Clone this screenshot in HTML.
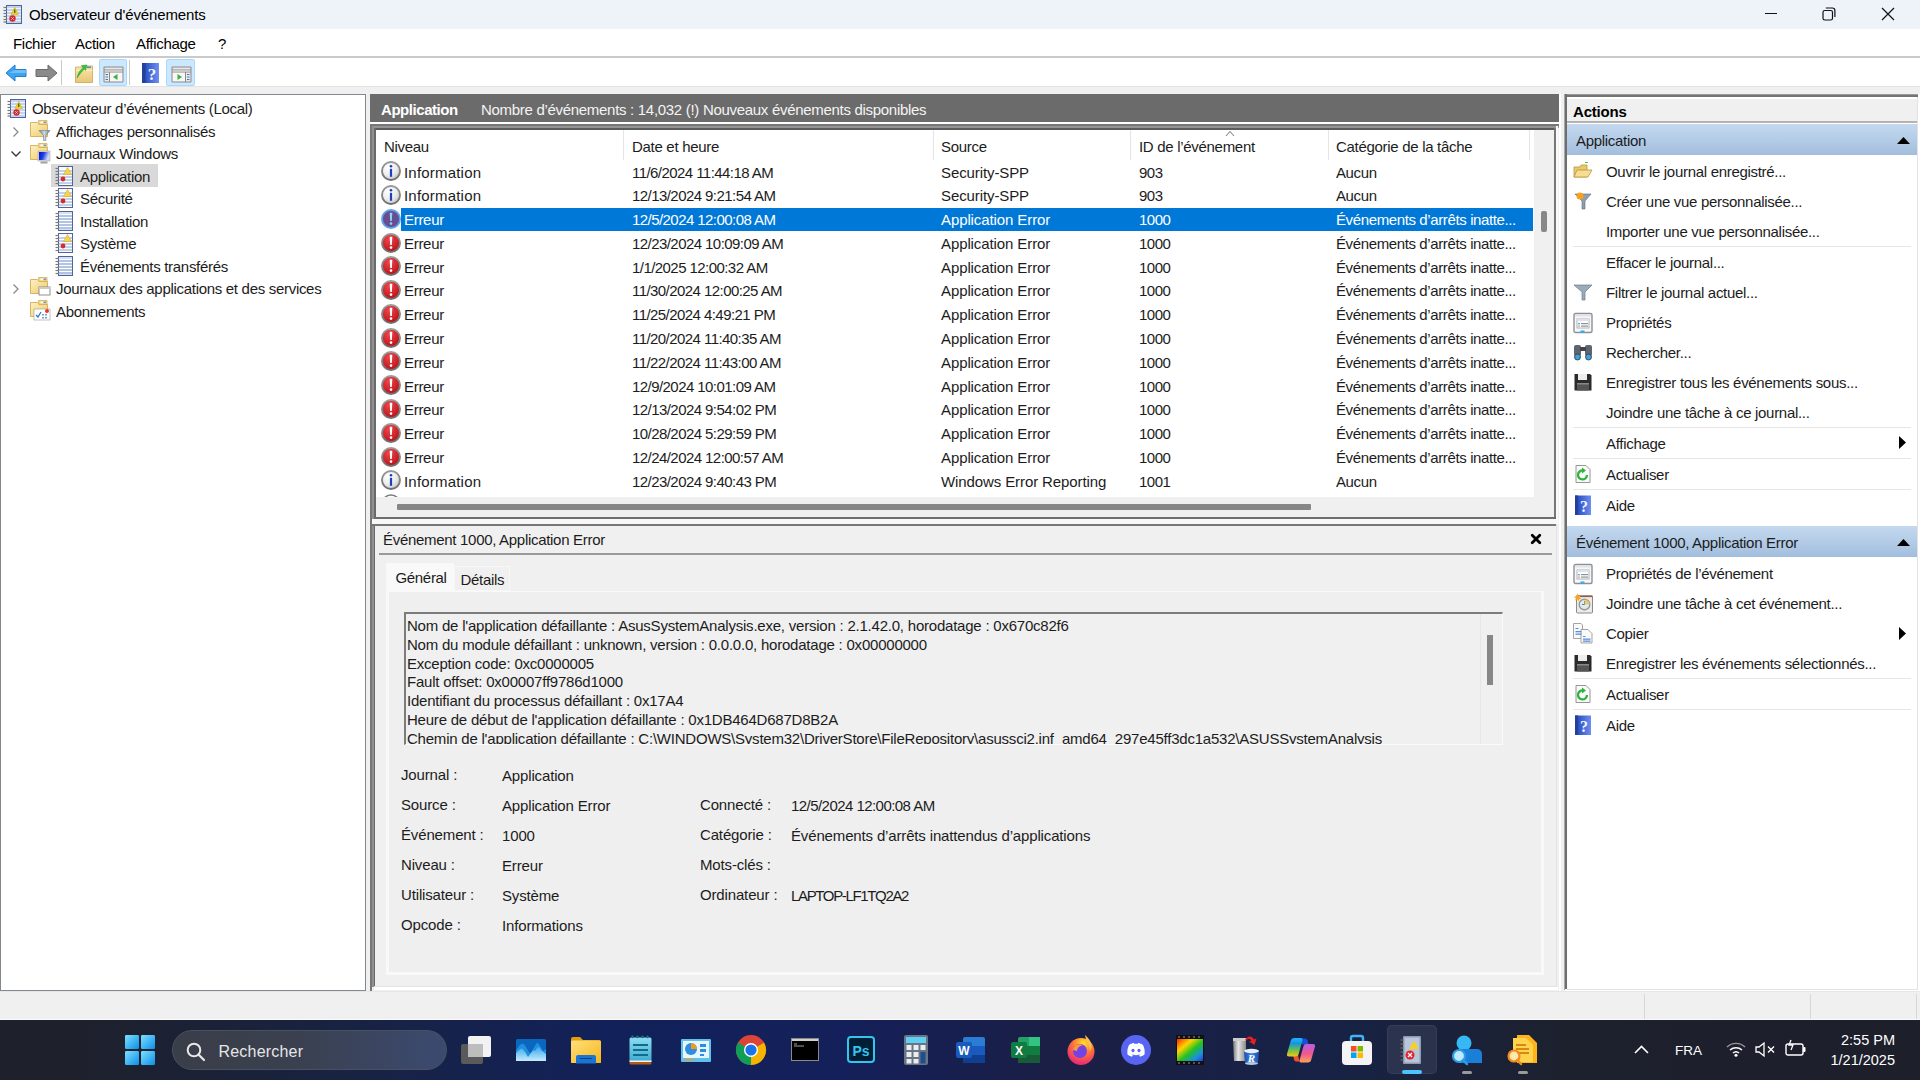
<!DOCTYPE html><html><head><meta charset="utf-8"><style>
html,body{margin:0;padding:0;width:1920px;height:1080px;overflow:hidden;background:#f0f0f0}
.t{position:absolute;white-space:pre;font-family:"Liberation Sans",sans-serif;line-height:1;color:#1c1c1c}
.r{position:absolute;box-sizing:border-box}
svg.r{overflow:visible}
</style></head><body>
<div class="r" style="left:0px;top:0px;width:1920px;height:29px;background:#eef3f9"></div>
<div class="r" style="left:0px;top:29px;width:1920px;height:28px;background:#fff"></div>
<div class="r" style="left:0px;top:56px;width:1920px;height:2px;background:#cacaca"></div>
<div class="r" style="left:0px;top:58px;width:1920px;height:28px;background:#fff"></div>
<div class="r" style="left:0px;top:86px;width:1920px;height:934px;background:#f0f0f0"></div>
<div class="r" style="left:0px;top:86px;width:1920px;height:1px;background:#e3e3e3"></div>
<svg class="r" style="left:3px;top:5px" width="21" height="21" viewBox="0 0 21 21"><g transform="scale(1.0)">
<rect x="3.5" y="0.5" width="15" height="18" fill="#c3d3ec" stroke="#4d62a0"/>
<g stroke="#eef4fc" stroke-width="1"><line x1="4" y1="3.5" x2="18" y2="3.5"/><line x1="4" y1="6.5" x2="18" y2="6.5"/><line x1="4" y1="9.5" x2="18" y2="9.5"/><line x1="4" y1="12.5" x2="18" y2="12.5"/><line x1="4" y1="15.5" x2="18" y2="15.5"/></g>
<g stroke="#777" stroke-width="1.2"><line x1="0.5" y1="2.5" x2="4" y2="2.5"/><line x1="0.5" y1="5.5" x2="4" y2="5.5"/><line x1="0.5" y1="8.5" x2="4" y2="8.5"/><line x1="0.5" y1="11.5" x2="4" y2="11.5"/><line x1="0.5" y1="14.5" x2="4" y2="14.5"/><line x1="0.5" y1="17" x2="4" y2="17"/></g>
<path d="M11.8 2.5 L15.5 9.5 H8 Z" fill="#f2d21c" stroke="#c9a20a" stroke-width="0.5"/><rect x="11.3" y="4.5" width="1" height="3.5" fill="#333"/>
<circle cx="9.5" cy="13.5" r="3.2" fill="#d52a30"/><path d="M8.3 12.3 L10.7 14.7 M10.7 12.3 L8.3 14.7" stroke="#f6c6c6" stroke-width="0.9"/>
</g></svg>
<div class="t" style="left:29px;top:7.30px;font-size:15px;color:#000;font-weight:normal;letter-spacing:-0.12px;">Observateur d&#x27;événements</div>
<div class="r" style="left:1765px;top:13px;width:12px;height:1px;background:#111"></div>
<svg class="r" style="left:1822px;top:7px" width="14" height="14" viewBox="0 0 14 14"><rect x="1" y="3.5" width="9.5" height="9.5" rx="1.8" fill="none" stroke="#111" stroke-width="1.2"/><path d="M3.8 1 h6.5 a2.6 2.6 0 0 1 2.6 2.6 v6.5" fill="none" stroke="#111" stroke-width="1.2"/></svg>
<svg class="r" style="left:1881px;top:7px" width="14" height="14" viewBox="0 0 14 14"><path d="M1 1 L13 13 M13 1 L1 13" stroke="#111" stroke-width="1.2"/></svg>
<div class="t" style="left:13px;top:36.30px;font-size:15px;color:#000;font-weight:normal;letter-spacing:-0.3px;">Fichier</div>
<div class="t" style="left:75px;top:36.30px;font-size:15px;color:#000;font-weight:normal;letter-spacing:-0.3px;">Action</div>
<div class="t" style="left:136px;top:36.30px;font-size:15px;color:#000;font-weight:normal;letter-spacing:-0.3px;">Affichage</div>
<div class="t" style="left:218px;top:36.30px;font-size:15px;color:#000;font-weight:normal;letter-spacing:-0.3px;">?</div>
<svg class="r" style="left:5px;top:63px" width="24" height="22" viewBox="0 0 24 22"><path d="M1 10 L10 2 V6.5 H21 V13.5 H10 V18 Z" fill="#3fa3f0" stroke="#1f7fd0" stroke-width="1"/><path d="M10 7 H21 V10 H4" fill="#8cd0ff" opacity=".6"/></svg>
<svg class="r" style="left:34px;top:63px" width="24" height="22" viewBox="0 0 24 22"><path d="M23 10 L14 2 V6.5 H2 V13.5 H14 V18 Z" fill="#8a8a8a" stroke="#6b6b6b" stroke-width="1"/></svg>
<div class="r" style="left:61px;top:60px;width:1px;height:25px;background:#c8c8c8"></div>
<div class="r" style="left:129px;top:60px;width:1px;height:25px;background:#c8c8c8"></div>
<svg class="r" style="left:75px;top:63px" width="19" height="20" viewBox="0 0 19 20"><defs><linearGradient id="fy" x1="0" y1="0" x2="0" y2="1"><stop offset="0" stop-color="#fbe7a8"/><stop offset="1" stop-color="#e9c577"/></linearGradient></defs><path d="M0.5 4 H7 L8 3 H17.5 V19.5 H0.5Z" fill="url(#fy)" stroke="#c9a55a" stroke-width="0.8"/><rect x="1" y="7" width="16.5" height="1" fill="#f9ecc4"/><rect x="12" y="3.5" width="4" height="1.6" fill="#4a90d9"/><path d="M2 15 C3 10 5 7 8 5 L6.5 2.5 L12 2 L10.5 7.5 L9.5 6 C7 8 5 11 2 15Z" fill="#3cc23c" stroke="#2a9a2a" stroke-width="0.5"/></svg>
<div class="r" style="left:99px;top:59px;width:28px;height:27px;background:#cce8ff;border:1px solid #a9d8ff;border-radius:2px"></div>
<svg class="r" style="left:103px;top:66px" width="21" height="17" viewBox="0 0 21 17"><rect x="0.5" y="0.5" width="20" height="16" rx="1" fill="#8a8a8a"/><rect x="1.5" y="1.5" width="18" height="2" fill="#e8e8e8"/><rect x="1.5" y="4" width="18" height="2" fill="#c8c8c8"/><rect x="1.5" y="6.5" width="4.5" height="9" fill="#eaeaea"/><g fill="#4a78c0"><rect x="2.5" y="8" width="2.5" height="1"/><rect x="2.5" y="10.5" width="2.5" height="1"/><rect x="2.5" y="13" width="2.5" height="1"/></g><rect x="7" y="6.5" width="12.5" height="9" fill="#f6f6f6"/><path d="M14.5 8 L10 11 L14.5 14Z" fill="#3fb03f"/></svg>
<svg class="r" style="left:142px;top:63px" width="17" height="20" viewBox="0 0 17 20"><defs><linearGradient id="hb" x1="0" y1="0" x2="1" y2="0"><stop offset="0" stop-color="#203c9c"/><stop offset=".25" stop-color="#2f55c8"/><stop offset="1" stop-color="#6f8ff0"/></linearGradient></defs><rect x="0" y="0" width="17" height="20" fill="url(#hb)"/><rect x="0" y="0" width="3.5" height="20" fill="#24409a"/><text x="10" y="16.5" font-family="Liberation Serif" font-weight="bold" font-size="17" fill="#f4f4ff" text-anchor="middle">?</text></svg>
<div class="r" style="left:166px;top:59px;width:29px;height:27px;background:#cce8ff;border:1px solid #a9d8ff;border-radius:2px"></div>
<svg class="r" style="left:171px;top:66px" width="21" height="17" viewBox="0 0 21 17"><rect x="0.5" y="0.5" width="20" height="16" rx="1" fill="#8a8a8a"/><rect x="1.5" y="1.5" width="18" height="2" fill="#e8e8e8"/><rect x="1.5" y="4" width="18" height="2" fill="#c8c8c8"/><rect x="15" y="6.5" width="4.5" height="9" fill="#eaeaea"/><g fill="#4a78c0"><rect x="16" y="8" width="2.5" height="1"/><rect x="16" y="10.5" width="2.5" height="1"/><rect x="16" y="13" width="2.5" height="1"/></g><rect x="1.5" y="6.5" width="12.5" height="9" fill="#f6f6f6"/><path d="M6.5 8 L11 11 L6.5 14Z" fill="#3fb03f"/></svg>
<div class="r" style="left:0px;top:94px;width:366px;height:897px;background:#fff;border:1px solid #828790"></div>
<svg class="r" style="left:7px;top:99px" width="21" height="21" viewBox="0 0 21 21"><g transform="scale(1.0)">
<rect x="3.5" y="0.5" width="15" height="18" fill="#c3d3ec" stroke="#4d62a0"/>
<g stroke="#eef4fc" stroke-width="1"><line x1="4" y1="3.5" x2="18" y2="3.5"/><line x1="4" y1="6.5" x2="18" y2="6.5"/><line x1="4" y1="9.5" x2="18" y2="9.5"/><line x1="4" y1="12.5" x2="18" y2="12.5"/><line x1="4" y1="15.5" x2="18" y2="15.5"/></g>
<g stroke="#777" stroke-width="1.2"><line x1="0.5" y1="2.5" x2="4" y2="2.5"/><line x1="0.5" y1="5.5" x2="4" y2="5.5"/><line x1="0.5" y1="8.5" x2="4" y2="8.5"/><line x1="0.5" y1="11.5" x2="4" y2="11.5"/><line x1="0.5" y1="14.5" x2="4" y2="14.5"/><line x1="0.5" y1="17" x2="4" y2="17"/></g>
<path d="M11.8 2.5 L15.5 9.5 H8 Z" fill="#f2d21c" stroke="#c9a20a" stroke-width="0.5"/><rect x="11.3" y="4.5" width="1" height="3.5" fill="#333"/>
<circle cx="9.5" cy="13.5" r="3.2" fill="#d52a30"/><path d="M8.3 12.3 L10.7 14.7 M10.7 12.3 L8.3 14.7" stroke="#f6c6c6" stroke-width="0.9"/>
</g></svg>
<div class="t" style="left:32px;top:101.30px;font-size:15px;color:#1c1c1c;font-weight:normal;letter-spacing:-0.3px;">Observateur d’événements (Local)</div>
<svg class="r" style="left:12px;top:126px" width="8" height="12" viewBox="0 0 8 12"><path d="M1.5 1.5 L6 6 L1.5 10.5" fill="none" stroke="#8a8a8a" stroke-width="1.3"/></svg>
<svg class="r" style="left:30px;top:120px" width="21" height="21" viewBox="0 0 21 21"><defs><linearGradient id="fgfilter" x1="0" y1="0" x2="1" y2="1"><stop offset="0" stop-color="#fdf0c0"/><stop offset="1" stop-color="#efcb6a"/></linearGradient></defs><path d="M0.5 2.5 H7.5 L9 4.5 H17.5 V16.5 H0.5Z" fill="url(#fgfilter)" stroke="#d5ad58" stroke-width="0.9"/><path d="M8.5 0.5 H17 V4.5 H9Z" fill="#f3d98e" stroke="#d5ad58" stroke-width="0.8"/><rect x="10.5" y="1.6" width="3" height="1.5" fill="#fff"/><rect x="13.5" y="1.6" width="2.5" height="1.5" fill="#5aa0e0"/><defs><linearGradient id="flt" x1="0" y1="0" x2="1" y2="0"><stop offset="0" stop-color="#6f8ea8"/><stop offset=".5" stop-color="#c8d8e6"/><stop offset="1" stop-color="#5d7890"/></linearGradient></defs><path d="M9 10.5 H20 L15.8 15.5 V20.5 H13.5 V15.5Z" fill="url(#flt)" stroke="#5d6f85" stroke-width="0.5"/></svg>
<div class="t" style="left:56px;top:123.80px;font-size:15px;color:#1c1c1c;font-weight:normal;letter-spacing:-0.3px;">Affichages personnalisés</div>
<svg class="r" style="left:10px;top:150px" width="12" height="8" viewBox="0 0 12 8"><path d="M1.5 1.5 L6 6 L10.5 1.5" fill="none" stroke="#333" stroke-width="1.3"/></svg>
<svg class="r" style="left:30px;top:143px" width="21" height="21" viewBox="0 0 21 21"><defs><linearGradient id="fgwin" x1="0" y1="0" x2="1" y2="1"><stop offset="0" stop-color="#fdf0c0"/><stop offset="1" stop-color="#efcb6a"/></linearGradient></defs><path d="M0.5 2.5 H7.5 L9 4.5 H17.5 V16.5 H0.5Z" fill="url(#fgwin)" stroke="#d5ad58" stroke-width="0.9"/><path d="M8.5 0.5 H17 V4.5 H9Z" fill="#f3d98e" stroke="#d5ad58" stroke-width="0.8"/><rect x="10.5" y="1.6" width="3" height="1.5" fill="#fff"/><rect x="13.5" y="1.6" width="2.5" height="1.5" fill="#5aa0e0"/><defs><linearGradient id="scr" x1="0" y1="0" x2="1" y2="0.3"><stop offset="0" stop-color="#0010c8"/><stop offset=".5" stop-color="#2040e0"/><stop offset="1" stop-color="#c8d8ff"/></linearGradient></defs><rect x="8" y="8" width="12" height="10" fill="#d6d6d6" stroke="#aaa" stroke-width="0.6"/><rect x="9" y="9" width="10" height="8" fill="url(#scr)"/><rect x="10.5" y="18.5" width="7" height="2" fill="#a0a0a0"/></svg>
<div class="t" style="left:56px;top:146.30px;font-size:15px;color:#1c1c1c;font-weight:normal;letter-spacing:-0.3px;">Journaux Windows</div>
<div class="r" style="left:51px;top:164px;width:107px;height:23px;background:#d9d9d9"></div>
<svg class="r" style="left:55px;top:166px" width="20" height="21" viewBox="0 0 20 21"><rect x="3.5" y="0.5" width="14" height="19" fill="#f7f9fd" stroke="#50659f"/><g stroke="#fbfdff"><line x1="4" y1="3.5" x2="17" y2="3.5"/><line x1="4" y1="6.5" x2="17" y2="6.5"/><line x1="4" y1="9.5" x2="17" y2="9.5"/><line x1="4" y1="12.5" x2="17" y2="12.5"/><line x1="4" y1="15.5" x2="17" y2="15.5"/></g><g stroke="#8fa6d3"><line x1="4" y1="5" x2="17" y2="5"/><line x1="4" y1="8" x2="17" y2="8"/><line x1="4" y1="11" x2="17" y2="11"/><line x1="4" y1="14" x2="17" y2="14"/><line x1="4" y1="17" x2="17" y2="17"/></g><g stroke="#7a7a7a" stroke-width="1.2"><line x1="0.5" y1="2.5" x2="4" y2="2.5"/><line x1="0.5" y1="5.5" x2="4" y2="5.5"/><line x1="0.5" y1="8.5" x2="4" y2="8.5"/><line x1="0.5" y1="11.5" x2="4" y2="11.5"/><line x1="0.5" y1="14.5" x2="4" y2="14.5"/><line x1="0.5" y1="17.5" x2="4" y2="17.5"/></g><path d="M12.5 1.5 L16.5 8.5 H8.5Z" fill="#f7d54a" stroke="#d1a420" stroke-width="0.5"/><circle cx="8" cy="13" r="2.4" fill="#d52b2b"/></svg>
<div class="t" style="left:80px;top:168.80px;font-size:15px;color:#1c1c1c;font-weight:normal;letter-spacing:-0.3px;">Application</div>
<svg class="r" style="left:55px;top:188px" width="20" height="21" viewBox="0 0 20 21"><rect x="3.5" y="0.5" width="14" height="19" fill="#f7f9fd" stroke="#50659f"/><g stroke="#fbfdff"><line x1="4" y1="3.5" x2="17" y2="3.5"/><line x1="4" y1="6.5" x2="17" y2="6.5"/><line x1="4" y1="9.5" x2="17" y2="9.5"/><line x1="4" y1="12.5" x2="17" y2="12.5"/><line x1="4" y1="15.5" x2="17" y2="15.5"/></g><g stroke="#8fa6d3"><line x1="4" y1="5" x2="17" y2="5"/><line x1="4" y1="8" x2="17" y2="8"/><line x1="4" y1="11" x2="17" y2="11"/><line x1="4" y1="14" x2="17" y2="14"/><line x1="4" y1="17" x2="17" y2="17"/></g><g stroke="#7a7a7a" stroke-width="1.2"><line x1="0.5" y1="2.5" x2="4" y2="2.5"/><line x1="0.5" y1="5.5" x2="4" y2="5.5"/><line x1="0.5" y1="8.5" x2="4" y2="8.5"/><line x1="0.5" y1="11.5" x2="4" y2="11.5"/><line x1="0.5" y1="14.5" x2="4" y2="14.5"/><line x1="0.5" y1="17.5" x2="4" y2="17.5"/></g><path d="M12.5 1.5 L16.5 8.5 H8.5Z" fill="#f7d54a" stroke="#d1a420" stroke-width="0.5"/><circle cx="8" cy="13" r="2.4" fill="#d52b2b"/></svg>
<div class="t" style="left:80px;top:191.30px;font-size:15px;color:#1c1c1c;font-weight:normal;letter-spacing:-0.3px;">Sécurité</div>
<svg class="r" style="left:55px;top:211px" width="20" height="21" viewBox="0 0 20 21"><rect x="3.5" y="0.5" width="14" height="19" fill="#d6e2f3" stroke="#50659f"/><g stroke="#fbfdff"><line x1="4" y1="3.5" x2="17" y2="3.5"/><line x1="4" y1="6.5" x2="17" y2="6.5"/><line x1="4" y1="9.5" x2="17" y2="9.5"/><line x1="4" y1="12.5" x2="17" y2="12.5"/><line x1="4" y1="15.5" x2="17" y2="15.5"/></g><g stroke="#8fa6d3"><line x1="4" y1="5" x2="17" y2="5"/><line x1="4" y1="8" x2="17" y2="8"/><line x1="4" y1="11" x2="17" y2="11"/><line x1="4" y1="14" x2="17" y2="14"/><line x1="4" y1="17" x2="17" y2="17"/></g><g stroke="#7a7a7a" stroke-width="1.2"><line x1="0.5" y1="2.5" x2="4" y2="2.5"/><line x1="0.5" y1="5.5" x2="4" y2="5.5"/><line x1="0.5" y1="8.5" x2="4" y2="8.5"/><line x1="0.5" y1="11.5" x2="4" y2="11.5"/><line x1="0.5" y1="14.5" x2="4" y2="14.5"/><line x1="0.5" y1="17.5" x2="4" y2="17.5"/></g></svg>
<div class="t" style="left:80px;top:213.80px;font-size:15px;color:#1c1c1c;font-weight:normal;letter-spacing:-0.3px;">Installation</div>
<svg class="r" style="left:55px;top:233px" width="20" height="21" viewBox="0 0 20 21"><rect x="3.5" y="0.5" width="14" height="19" fill="#f7f9fd" stroke="#50659f"/><g stroke="#fbfdff"><line x1="4" y1="3.5" x2="17" y2="3.5"/><line x1="4" y1="6.5" x2="17" y2="6.5"/><line x1="4" y1="9.5" x2="17" y2="9.5"/><line x1="4" y1="12.5" x2="17" y2="12.5"/><line x1="4" y1="15.5" x2="17" y2="15.5"/></g><g stroke="#8fa6d3"><line x1="4" y1="5" x2="17" y2="5"/><line x1="4" y1="8" x2="17" y2="8"/><line x1="4" y1="11" x2="17" y2="11"/><line x1="4" y1="14" x2="17" y2="14"/><line x1="4" y1="17" x2="17" y2="17"/></g><g stroke="#7a7a7a" stroke-width="1.2"><line x1="0.5" y1="2.5" x2="4" y2="2.5"/><line x1="0.5" y1="5.5" x2="4" y2="5.5"/><line x1="0.5" y1="8.5" x2="4" y2="8.5"/><line x1="0.5" y1="11.5" x2="4" y2="11.5"/><line x1="0.5" y1="14.5" x2="4" y2="14.5"/><line x1="0.5" y1="17.5" x2="4" y2="17.5"/></g><path d="M12.5 1.5 L16.5 8.5 H8.5Z" fill="#f7d54a" stroke="#d1a420" stroke-width="0.5"/><circle cx="8" cy="13" r="2.4" fill="#d52b2b"/></svg>
<div class="t" style="left:80px;top:236.30px;font-size:15px;color:#1c1c1c;font-weight:normal;letter-spacing:-0.3px;">Système</div>
<svg class="r" style="left:55px;top:256px" width="20" height="21" viewBox="0 0 20 21"><rect x="3.5" y="0.5" width="14" height="19" fill="#d6e2f3" stroke="#50659f"/><g stroke="#fbfdff"><line x1="4" y1="3.5" x2="17" y2="3.5"/><line x1="4" y1="6.5" x2="17" y2="6.5"/><line x1="4" y1="9.5" x2="17" y2="9.5"/><line x1="4" y1="12.5" x2="17" y2="12.5"/><line x1="4" y1="15.5" x2="17" y2="15.5"/></g><g stroke="#8fa6d3"><line x1="4" y1="5" x2="17" y2="5"/><line x1="4" y1="8" x2="17" y2="8"/><line x1="4" y1="11" x2="17" y2="11"/><line x1="4" y1="14" x2="17" y2="14"/><line x1="4" y1="17" x2="17" y2="17"/></g><g stroke="#7a7a7a" stroke-width="1.2"><line x1="0.5" y1="2.5" x2="4" y2="2.5"/><line x1="0.5" y1="5.5" x2="4" y2="5.5"/><line x1="0.5" y1="8.5" x2="4" y2="8.5"/><line x1="0.5" y1="11.5" x2="4" y2="11.5"/><line x1="0.5" y1="14.5" x2="4" y2="14.5"/><line x1="0.5" y1="17.5" x2="4" y2="17.5"/></g></svg>
<div class="t" style="left:80px;top:258.80px;font-size:15px;color:#1c1c1c;font-weight:normal;letter-spacing:-0.3px;">Événements transférés</div>
<svg class="r" style="left:12px;top:283px" width="8" height="12" viewBox="0 0 8 12"><path d="M1.5 1.5 L6 6 L1.5 10.5" fill="none" stroke="#8a8a8a" stroke-width="1.3"/></svg>
<svg class="r" style="left:30px;top:277px" width="21" height="21" viewBox="0 0 21 21"><defs><linearGradient id="fgbox" x1="0" y1="0" x2="1" y2="1"><stop offset="0" stop-color="#fdf0c0"/><stop offset="1" stop-color="#efcb6a"/></linearGradient></defs><path d="M0.5 2.5 H7.5 L9 4.5 H17.5 V16.5 H0.5Z" fill="url(#fgbox)" stroke="#d5ad58" stroke-width="0.9"/><path d="M8.5 0.5 H17 V4.5 H9Z" fill="#f3d98e" stroke="#d5ad58" stroke-width="0.8"/><rect x="10.5" y="1.6" width="3" height="1.5" fill="#fff"/><rect x="13.5" y="1.6" width="2.5" height="1.5" fill="#5aa0e0"/><rect x="9" y="10" width="11" height="8" fill="#fff" stroke="#777" stroke-width="0.8"/><rect x="9" y="10" width="11" height="2" fill="#ccc"/></svg>
<div class="t" style="left:56px;top:281.30px;font-size:15px;color:#1c1c1c;font-weight:normal;letter-spacing:-0.3px;">Journaux des applications et des services</div>
<svg class="r" style="left:30px;top:300px" width="21" height="21" viewBox="0 0 21 21"><defs><linearGradient id="fgsub" x1="0" y1="0" x2="1" y2="1"><stop offset="0" stop-color="#fdf0c0"/><stop offset="1" stop-color="#efcb6a"/></linearGradient></defs><path d="M0.5 2.5 H7.5 L9 4.5 H17.5 V16.5 H0.5Z" fill="url(#fgsub)" stroke="#d5ad58" stroke-width="0.9"/><path d="M8.5 0.5 H17 V4.5 H9Z" fill="#f3d98e" stroke="#d5ad58" stroke-width="0.8"/><rect x="10.5" y="1.6" width="3" height="1.5" fill="#fff"/><rect x="13.5" y="1.6" width="2.5" height="1.5" fill="#5aa0e0"/><rect x="4" y="9" width="16" height="11" fill="#fff" stroke="#999" stroke-width="0.6"/><path d="M6 15 L8 17 L11 12" stroke="#2a6fd6" stroke-width="1.2" fill="none"/><circle cx="17" cy="11" r="2" fill="#e33"/><g fill="#7aa0d0"><rect x="12" y="14" width="2" height="1.5"/><rect x="15" y="14" width="2" height="1.5"/><rect x="12" y="17" width="2" height="1.5"/><rect x="15" y="17" width="2" height="1.5"/></g></svg>
<div class="t" style="left:56px;top:303.80px;font-size:15px;color:#1c1c1c;font-weight:normal;letter-spacing:-0.3px;">Abonnements</div>
<div class="r" style="left:370px;top:94px;width:1190px;height:29px;background:#6b6b6b"></div>
<div class="r" style="left:370px;top:122px;width:1190px;height:2px;background:#fff"></div>
<div class="t" style="left:381px;top:102.30px;font-size:15px;color:#fff;font-weight:bold;letter-spacing:-0.45px;">Application</div>
<div class="t" style="left:481px;top:102.30px;font-size:15px;color:#f4f4f4;font-weight:normal;letter-spacing:-0.3px;">Nombre d’événements : 14,032 (!) Nouveaux événements disponibles</div>
<div class="r" style="left:370px;top:124px;width:2px;height:867px;background:#787878"></div>
<div class="r" style="left:370px;top:124px;width:1191px;height:2px;background:#777"></div>
<div class="r" style="left:372px;top:126px;width:1187px;height:2px;background:#939393"></div>
<div class="r" style="left:372px;top:126px;width:2px;height:393px;background:#909090"></div>
<div class="r" style="left:374px;top:128px;width:1182px;height:2px;background:#5c5c5c"></div>
<div class="r" style="left:374px;top:128px;width:2px;height:391px;background:#6a6a6a"></div>
<div class="r" style="left:1554px;top:128px;width:2px;height:391px;background:#777"></div>
<div class="r" style="left:374px;top:517px;width:1182px;height:2px;background:#6d6d6d"></div>
<div class="r" style="left:1556px;top:126px;width:2px;height:394px;background:#fafafa"></div>
<div class="r" style="left:1559px;top:94px;width:2px;height:897px;background:#fff"></div>
<div class="r" style="left:372px;top:519px;width:1187px;height:5px;background:#f8f8f8"></div>
<div class="r" style="left:376px;top:130px;width:1178px;height:387px;background:#f0f0f0"></div>
<div class="r" style="left:376px;top:130px;width:1158px;height:367px;background:#fff"></div>
<div class="r" style="left:623px;top:130px;width:1px;height:30px;background:#e5e5e5"></div>
<div class="r" style="left:933px;top:130px;width:1px;height:30px;background:#e5e5e5"></div>
<div class="r" style="left:1130px;top:130px;width:1px;height:30px;background:#e5e5e5"></div>
<div class="r" style="left:1328px;top:130px;width:1px;height:30px;background:#e5e5e5"></div>
<div class="r" style="left:1529px;top:130px;width:1px;height:30px;background:#e5e5e5"></div>
<div class="t" style="left:384px;top:138.80px;font-size:15px;color:#1c1c1c;font-weight:normal;letter-spacing:-0.3px;">Niveau</div>
<div class="t" style="left:632px;top:138.80px;font-size:15px;color:#1c1c1c;font-weight:normal;letter-spacing:-0.3px;">Date et heure</div>
<div class="t" style="left:941px;top:138.80px;font-size:15px;color:#1c1c1c;font-weight:normal;letter-spacing:-0.3px;">Source</div>
<div class="t" style="left:1139px;top:138.80px;font-size:15px;color:#1c1c1c;font-weight:normal;letter-spacing:-0.3px;">ID de l’événement</div>
<div class="t" style="left:1336px;top:138.80px;font-size:15px;color:#1c1c1c;font-weight:normal;letter-spacing:-0.3px;">Catégorie de la tâche</div>
<svg class="r" style="left:1225px;top:130px" width="10" height="7" viewBox="0 0 10 7"><path d="M1 6 L5 1.5 L9 6" fill="none" stroke="#8a8a8a" stroke-width="1.1"/></svg>
<svg width="0" height="0" style="position:absolute"><defs><radialGradient id="gi" cx="35%" cy="30%" r="75%"><stop offset="0" stop-color="#fff"/><stop offset=".6" stop-color="#ececec"/><stop offset="1" stop-color="#c4c4c4"/></radialGradient><radialGradient id="gr" cx="40%" cy="30%" r="75%"><stop offset="0" stop-color="#f0454a"/><stop offset=".7" stop-color="#c81e25"/><stop offset="1" stop-color="#a3141a"/></radialGradient><linearGradient id="gb" x1="0" y1="0" x2="0" y2="1"><stop offset="0" stop-color="#9a9a9a"/><stop offset="1" stop-color="#6f6f6f"/></linearGradient></defs></svg>
<svg class="r" style="left:380.7px;top:161.3px" width="20" height="20" viewBox="0 0 20 20"><circle cx="10" cy="10" r="9" fill="url(#gi)" stroke="url(#gb)" stroke-width="1.9"/><circle cx="10" cy="5.3" r="1.3" fill="#1a3fbf"/><path d="M8.9 7.8 H11.1 V15.8 H8.9Z" fill="#1a3fbf"/></svg>
<div class="t" style="left:404px;top:164.60px;font-size:15px;color:#1c1c1c;font-weight:normal;letter-spacing:0.2px;">Information</div>
<div class="t" style="left:632px;top:164.60px;font-size:15px;color:#1c1c1c;font-weight:normal;letter-spacing:-0.56px;">11/6/2024 11:44:18 AM</div>
<div class="t" style="left:941px;top:164.60px;font-size:15px;color:#1c1c1c;font-weight:normal;letter-spacing:-0.1px;">Security-SPP</div>
<div class="t" style="left:1139px;top:164.60px;font-size:15px;color:#1c1c1c;font-weight:normal;letter-spacing:-0.5px;">903</div>
<div class="t" style="left:1336px;top:164.60px;font-size:15px;color:#1c1c1c;font-weight:normal;letter-spacing:-0.38px;">Aucun</div>
<svg class="r" style="left:380.7px;top:185.07000000000002px" width="20" height="20" viewBox="0 0 20 20"><circle cx="10" cy="10" r="9" fill="url(#gi)" stroke="url(#gb)" stroke-width="1.9"/><circle cx="10" cy="5.3" r="1.3" fill="#1a3fbf"/><path d="M8.9 7.8 H11.1 V15.8 H8.9Z" fill="#1a3fbf"/></svg>
<div class="t" style="left:404px;top:188.37px;font-size:15px;color:#1c1c1c;font-weight:normal;letter-spacing:0.2px;">Information</div>
<div class="t" style="left:632px;top:188.37px;font-size:15px;color:#1c1c1c;font-weight:normal;letter-spacing:-0.56px;">12/13/2024 9:21:54 AM</div>
<div class="t" style="left:941px;top:188.37px;font-size:15px;color:#1c1c1c;font-weight:normal;letter-spacing:-0.1px;">Security-SPP</div>
<div class="t" style="left:1139px;top:188.37px;font-size:15px;color:#1c1c1c;font-weight:normal;letter-spacing:-0.5px;">903</div>
<div class="t" style="left:1336px;top:188.37px;font-size:15px;color:#1c1c1c;font-weight:normal;letter-spacing:-0.38px;">Aucun</div>
<div class="r" style="left:401px;top:208px;width:1132px;height:23px;background:#0078d7"></div>
<svg class="r" style="left:380.7px;top:208.84px" width="20" height="20" viewBox="0 0 20 20"><circle cx="10" cy="10" r="9" fill="#684e8e" stroke="#5ba3e6" stroke-width="1.9"/><path d="M8.7 3.8 H11.3 L10.8 12 H9.2Z" fill="#8fd0ff"/><circle cx="10" cy="14.6" r="1.3" fill="#8fd0ff"/></svg>
<div class="t" style="left:404px;top:212.14px;font-size:15px;color:#fff;font-weight:normal;letter-spacing:-0.3px;">Erreur</div>
<div class="t" style="left:632px;top:212.14px;font-size:15px;color:#fff;font-weight:normal;letter-spacing:-0.56px;">12/5/2024 12:00:08 AM</div>
<div class="t" style="left:941px;top:212.14px;font-size:15px;color:#fff;font-weight:normal;letter-spacing:-0.1px;">Application Error</div>
<div class="t" style="left:1139px;top:212.14px;font-size:15px;color:#fff;font-weight:normal;letter-spacing:-0.5px;">1000</div>
<div class="t" style="left:1336px;top:212.14px;font-size:15px;color:#fff;font-weight:normal;letter-spacing:-0.38px;">Événements d’arrêts inatte...</div>
<svg class="r" style="left:380.7px;top:232.61px" width="20" height="20" viewBox="0 0 20 20"><circle cx="10" cy="10" r="9" fill="url(#gr)" stroke="url(#gb)" stroke-width="1.9"/><path d="M8.7 3.8 H11.3 L10.8 12 H9.2Z" fill="#fff"/><circle cx="10" cy="14.6" r="1.3" fill="#fff"/></svg>
<div class="t" style="left:404px;top:235.91px;font-size:15px;color:#1c1c1c;font-weight:normal;letter-spacing:-0.3px;">Erreur</div>
<div class="t" style="left:632px;top:235.91px;font-size:15px;color:#1c1c1c;font-weight:normal;letter-spacing:-0.56px;">12/23/2024 10:09:09 AM</div>
<div class="t" style="left:941px;top:235.91px;font-size:15px;color:#1c1c1c;font-weight:normal;letter-spacing:-0.1px;">Application Error</div>
<div class="t" style="left:1139px;top:235.91px;font-size:15px;color:#1c1c1c;font-weight:normal;letter-spacing:-0.5px;">1000</div>
<div class="t" style="left:1336px;top:235.91px;font-size:15px;color:#1c1c1c;font-weight:normal;letter-spacing:-0.38px;">Événements d’arrêts inatte...</div>
<svg class="r" style="left:380.7px;top:256.38px" width="20" height="20" viewBox="0 0 20 20"><circle cx="10" cy="10" r="9" fill="url(#gr)" stroke="url(#gb)" stroke-width="1.9"/><path d="M8.7 3.8 H11.3 L10.8 12 H9.2Z" fill="#fff"/><circle cx="10" cy="14.6" r="1.3" fill="#fff"/></svg>
<div class="t" style="left:404px;top:259.68px;font-size:15px;color:#1c1c1c;font-weight:normal;letter-spacing:-0.3px;">Erreur</div>
<div class="t" style="left:632px;top:259.68px;font-size:15px;color:#1c1c1c;font-weight:normal;letter-spacing:-0.56px;">1/1/2025 12:00:32 AM</div>
<div class="t" style="left:941px;top:259.68px;font-size:15px;color:#1c1c1c;font-weight:normal;letter-spacing:-0.1px;">Application Error</div>
<div class="t" style="left:1139px;top:259.68px;font-size:15px;color:#1c1c1c;font-weight:normal;letter-spacing:-0.5px;">1000</div>
<div class="t" style="left:1336px;top:259.68px;font-size:15px;color:#1c1c1c;font-weight:normal;letter-spacing:-0.38px;">Événements d’arrêts inatte...</div>
<svg class="r" style="left:380.7px;top:280.15px" width="20" height="20" viewBox="0 0 20 20"><circle cx="10" cy="10" r="9" fill="url(#gr)" stroke="url(#gb)" stroke-width="1.9"/><path d="M8.7 3.8 H11.3 L10.8 12 H9.2Z" fill="#fff"/><circle cx="10" cy="14.6" r="1.3" fill="#fff"/></svg>
<div class="t" style="left:404px;top:283.45px;font-size:15px;color:#1c1c1c;font-weight:normal;letter-spacing:-0.3px;">Erreur</div>
<div class="t" style="left:632px;top:283.45px;font-size:15px;color:#1c1c1c;font-weight:normal;letter-spacing:-0.56px;">11/30/2024 12:00:25 AM</div>
<div class="t" style="left:941px;top:283.45px;font-size:15px;color:#1c1c1c;font-weight:normal;letter-spacing:-0.1px;">Application Error</div>
<div class="t" style="left:1139px;top:283.45px;font-size:15px;color:#1c1c1c;font-weight:normal;letter-spacing:-0.5px;">1000</div>
<div class="t" style="left:1336px;top:283.45px;font-size:15px;color:#1c1c1c;font-weight:normal;letter-spacing:-0.38px;">Événements d’arrêts inatte...</div>
<svg class="r" style="left:380.7px;top:303.92px" width="20" height="20" viewBox="0 0 20 20"><circle cx="10" cy="10" r="9" fill="url(#gr)" stroke="url(#gb)" stroke-width="1.9"/><path d="M8.7 3.8 H11.3 L10.8 12 H9.2Z" fill="#fff"/><circle cx="10" cy="14.6" r="1.3" fill="#fff"/></svg>
<div class="t" style="left:404px;top:307.22px;font-size:15px;color:#1c1c1c;font-weight:normal;letter-spacing:-0.3px;">Erreur</div>
<div class="t" style="left:632px;top:307.22px;font-size:15px;color:#1c1c1c;font-weight:normal;letter-spacing:-0.56px;">11/25/2024 4:49:21 PM</div>
<div class="t" style="left:941px;top:307.22px;font-size:15px;color:#1c1c1c;font-weight:normal;letter-spacing:-0.1px;">Application Error</div>
<div class="t" style="left:1139px;top:307.22px;font-size:15px;color:#1c1c1c;font-weight:normal;letter-spacing:-0.5px;">1000</div>
<div class="t" style="left:1336px;top:307.22px;font-size:15px;color:#1c1c1c;font-weight:normal;letter-spacing:-0.38px;">Événements d’arrêts inatte...</div>
<svg class="r" style="left:380.7px;top:327.69px" width="20" height="20" viewBox="0 0 20 20"><circle cx="10" cy="10" r="9" fill="url(#gr)" stroke="url(#gb)" stroke-width="1.9"/><path d="M8.7 3.8 H11.3 L10.8 12 H9.2Z" fill="#fff"/><circle cx="10" cy="14.6" r="1.3" fill="#fff"/></svg>
<div class="t" style="left:404px;top:330.99px;font-size:15px;color:#1c1c1c;font-weight:normal;letter-spacing:-0.3px;">Erreur</div>
<div class="t" style="left:632px;top:330.99px;font-size:15px;color:#1c1c1c;font-weight:normal;letter-spacing:-0.56px;">11/20/2024 11:40:35 AM</div>
<div class="t" style="left:941px;top:330.99px;font-size:15px;color:#1c1c1c;font-weight:normal;letter-spacing:-0.1px;">Application Error</div>
<div class="t" style="left:1139px;top:330.99px;font-size:15px;color:#1c1c1c;font-weight:normal;letter-spacing:-0.5px;">1000</div>
<div class="t" style="left:1336px;top:330.99px;font-size:15px;color:#1c1c1c;font-weight:normal;letter-spacing:-0.38px;">Événements d’arrêts inatte...</div>
<svg class="r" style="left:380.7px;top:351.46000000000004px" width="20" height="20" viewBox="0 0 20 20"><circle cx="10" cy="10" r="9" fill="url(#gr)" stroke="url(#gb)" stroke-width="1.9"/><path d="M8.7 3.8 H11.3 L10.8 12 H9.2Z" fill="#fff"/><circle cx="10" cy="14.6" r="1.3" fill="#fff"/></svg>
<div class="t" style="left:404px;top:354.76px;font-size:15px;color:#1c1c1c;font-weight:normal;letter-spacing:-0.3px;">Erreur</div>
<div class="t" style="left:632px;top:354.76px;font-size:15px;color:#1c1c1c;font-weight:normal;letter-spacing:-0.56px;">11/22/2024 11:43:00 AM</div>
<div class="t" style="left:941px;top:354.76px;font-size:15px;color:#1c1c1c;font-weight:normal;letter-spacing:-0.1px;">Application Error</div>
<div class="t" style="left:1139px;top:354.76px;font-size:15px;color:#1c1c1c;font-weight:normal;letter-spacing:-0.5px;">1000</div>
<div class="t" style="left:1336px;top:354.76px;font-size:15px;color:#1c1c1c;font-weight:normal;letter-spacing:-0.38px;">Événements d’arrêts inatte...</div>
<svg class="r" style="left:380.7px;top:375.23px" width="20" height="20" viewBox="0 0 20 20"><circle cx="10" cy="10" r="9" fill="url(#gr)" stroke="url(#gb)" stroke-width="1.9"/><path d="M8.7 3.8 H11.3 L10.8 12 H9.2Z" fill="#fff"/><circle cx="10" cy="14.6" r="1.3" fill="#fff"/></svg>
<div class="t" style="left:404px;top:378.53px;font-size:15px;color:#1c1c1c;font-weight:normal;letter-spacing:-0.3px;">Erreur</div>
<div class="t" style="left:632px;top:378.53px;font-size:15px;color:#1c1c1c;font-weight:normal;letter-spacing:-0.56px;">12/9/2024 10:01:09 AM</div>
<div class="t" style="left:941px;top:378.53px;font-size:15px;color:#1c1c1c;font-weight:normal;letter-spacing:-0.1px;">Application Error</div>
<div class="t" style="left:1139px;top:378.53px;font-size:15px;color:#1c1c1c;font-weight:normal;letter-spacing:-0.5px;">1000</div>
<div class="t" style="left:1336px;top:378.53px;font-size:15px;color:#1c1c1c;font-weight:normal;letter-spacing:-0.38px;">Événements d’arrêts inatte...</div>
<svg class="r" style="left:380.7px;top:399.0px" width="20" height="20" viewBox="0 0 20 20"><circle cx="10" cy="10" r="9" fill="url(#gr)" stroke="url(#gb)" stroke-width="1.9"/><path d="M8.7 3.8 H11.3 L10.8 12 H9.2Z" fill="#fff"/><circle cx="10" cy="14.6" r="1.3" fill="#fff"/></svg>
<div class="t" style="left:404px;top:402.30px;font-size:15px;color:#1c1c1c;font-weight:normal;letter-spacing:-0.3px;">Erreur</div>
<div class="t" style="left:632px;top:402.30px;font-size:15px;color:#1c1c1c;font-weight:normal;letter-spacing:-0.56px;">12/13/2024 9:54:02 PM</div>
<div class="t" style="left:941px;top:402.30px;font-size:15px;color:#1c1c1c;font-weight:normal;letter-spacing:-0.1px;">Application Error</div>
<div class="t" style="left:1139px;top:402.30px;font-size:15px;color:#1c1c1c;font-weight:normal;letter-spacing:-0.5px;">1000</div>
<div class="t" style="left:1336px;top:402.30px;font-size:15px;color:#1c1c1c;font-weight:normal;letter-spacing:-0.38px;">Événements d’arrêts inatte...</div>
<svg class="r" style="left:380.7px;top:422.77px" width="20" height="20" viewBox="0 0 20 20"><circle cx="10" cy="10" r="9" fill="url(#gr)" stroke="url(#gb)" stroke-width="1.9"/><path d="M8.7 3.8 H11.3 L10.8 12 H9.2Z" fill="#fff"/><circle cx="10" cy="14.6" r="1.3" fill="#fff"/></svg>
<div class="t" style="left:404px;top:426.07px;font-size:15px;color:#1c1c1c;font-weight:normal;letter-spacing:-0.3px;">Erreur</div>
<div class="t" style="left:632px;top:426.07px;font-size:15px;color:#1c1c1c;font-weight:normal;letter-spacing:-0.56px;">10/28/2024 5:29:59 PM</div>
<div class="t" style="left:941px;top:426.07px;font-size:15px;color:#1c1c1c;font-weight:normal;letter-spacing:-0.1px;">Application Error</div>
<div class="t" style="left:1139px;top:426.07px;font-size:15px;color:#1c1c1c;font-weight:normal;letter-spacing:-0.5px;">1000</div>
<div class="t" style="left:1336px;top:426.07px;font-size:15px;color:#1c1c1c;font-weight:normal;letter-spacing:-0.38px;">Événements d’arrêts inatte...</div>
<svg class="r" style="left:380.7px;top:446.54px" width="20" height="20" viewBox="0 0 20 20"><circle cx="10" cy="10" r="9" fill="url(#gr)" stroke="url(#gb)" stroke-width="1.9"/><path d="M8.7 3.8 H11.3 L10.8 12 H9.2Z" fill="#fff"/><circle cx="10" cy="14.6" r="1.3" fill="#fff"/></svg>
<div class="t" style="left:404px;top:449.84px;font-size:15px;color:#1c1c1c;font-weight:normal;letter-spacing:-0.3px;">Erreur</div>
<div class="t" style="left:632px;top:449.84px;font-size:15px;color:#1c1c1c;font-weight:normal;letter-spacing:-0.56px;">12/24/2024 12:00:57 AM</div>
<div class="t" style="left:941px;top:449.84px;font-size:15px;color:#1c1c1c;font-weight:normal;letter-spacing:-0.1px;">Application Error</div>
<div class="t" style="left:1139px;top:449.84px;font-size:15px;color:#1c1c1c;font-weight:normal;letter-spacing:-0.5px;">1000</div>
<div class="t" style="left:1336px;top:449.84px;font-size:15px;color:#1c1c1c;font-weight:normal;letter-spacing:-0.38px;">Événements d’arrêts inatte...</div>
<svg class="r" style="left:380.7px;top:470.31px" width="20" height="20" viewBox="0 0 20 20"><circle cx="10" cy="10" r="9" fill="url(#gi)" stroke="url(#gb)" stroke-width="1.9"/><circle cx="10" cy="5.3" r="1.3" fill="#1a3fbf"/><path d="M8.9 7.8 H11.1 V15.8 H8.9Z" fill="#1a3fbf"/></svg>
<div class="t" style="left:404px;top:473.61px;font-size:15px;color:#1c1c1c;font-weight:normal;letter-spacing:0.2px;">Information</div>
<div class="t" style="left:632px;top:473.61px;font-size:15px;color:#1c1c1c;font-weight:normal;letter-spacing:-0.56px;">12/23/2024 9:40:43 PM</div>
<div class="t" style="left:941px;top:473.61px;font-size:15px;color:#1c1c1c;font-weight:normal;letter-spacing:-0.1px;">Windows Error Reporting</div>
<div class="t" style="left:1139px;top:473.61px;font-size:15px;color:#1c1c1c;font-weight:normal;letter-spacing:-0.5px;">1001</div>
<div class="t" style="left:1336px;top:473.61px;font-size:15px;color:#1c1c1c;font-weight:normal;letter-spacing:-0.38px;">Aucun</div>
<div class="r" style="left:376px;top:492px;width:1158px;height:5px;background:#fff"></div>
<div class="r" style="left:376px;top:490px;width:40px;height:7px;overflow:hidden"><svg style="position:absolute;left:4.7px;top:4.1px" width="20" height="20" viewBox="0 0 20 20"><circle cx="10" cy="10" r="9" fill="#fff" stroke="#7a7a7a" stroke-width="1.6"/></svg></div>
<div class="r" style="left:397px;top:504px;width:914px;height:6px;background:#878787;border-radius:1px"></div>
<div class="r" style="left:1541px;top:211px;width:6px;height:21px;background:#878787;border-radius:2px"></div>
<div class="r" style="left:372px;top:524px;width:1184px;height:2px;background:#777"></div>
<div class="r" style="left:372px;top:526px;width:2px;height:461px;background:#909090"></div>
<div class="r" style="left:374px;top:526px;width:1px;height:461px;background:#6a6a6a"></div>
<div class="r" style="left:375px;top:526px;width:1181px;height:461px;background:#f0f0f0"></div>
<div class="r" style="left:1556px;top:524px;width:1px;height:463px;background:#e3e3e3"></div>
<div class="r" style="left:374px;top:986px;width:1183px;height:1px;background:#e3e3e3"></div>
<div class="r" style="left:374px;top:987px;width:1184px;height:3px;background:#fff"></div>
<div class="t" style="left:383px;top:532.00px;font-size:15px;color:#1c1c1c;font-weight:normal;letter-spacing:-0.3px;">Événement 1000, Application Error</div>
<svg class="r" style="left:1529px;top:532px" width="14" height="14" viewBox="0 0 14 14"><path d="M3.2 3.2 L10.8 10.8 M10.8 3.2 L3.2 10.8" stroke="#000" stroke-width="2.8" stroke-linecap="round"/></svg>
<div class="r" style="left:379px;top:553px;width:1173px;height:2px;background:#9a9a9a"></div>
<div class="r" style="left:386px;top:563px;width:68px;height:29px;background:#f9f9f9"></div>
<div class="r" style="left:454px;top:566px;width:56px;height:25px;background:#f0f0f0;border:1px solid #f7f7f7"></div>
<div class="t" style="left:395.4px;top:569.80px;font-size:15px;color:#1c1c1c;font-weight:normal;letter-spacing:-0.3px;">Général</div>
<div class="t" style="left:460.5px;top:572.00px;font-size:15px;color:#1c1c1c;font-weight:normal;letter-spacing:-0.3px;">Détails</div>
<div class="r" style="left:386px;top:591px;width:1158px;height:384px;background:#f9f9f9"></div>
<div class="r" style="left:389px;top:592px;width:1152px;height:380px;background:#efefef"></div>
<div class="r" style="left:404px;top:612px;width:1099px;height:133px;background:#f0f0f0;border-top:2px solid #7c7c7c;border-left:2px solid #7c7c7c;border-right:1px solid #fafafa;border-bottom:1px solid #fafafa"></div>
<div class="r" style="left:405px;top:614px;width:1075px;height:130px;overflow:hidden">
<div class="t" style="left:2px;top:4.30px;font-size:15px;letter-spacing:-0.22px">Nom de l&#x27;application défaillante : AsusSystemAnalysis.exe, version : 2.1.42.0, horodatage : 0x670c82f6</div>
<div class="t" style="left:2px;top:23.00px;font-size:15px;letter-spacing:-0.22px">Nom du module défaillant : unknown, version : 0.0.0.0, horodatage : 0x00000000</div>
<div class="t" style="left:2px;top:41.70px;font-size:15px;letter-spacing:-0.22px">Exception code: 0xc0000005</div>
<div class="t" style="left:2px;top:60.40px;font-size:15px;letter-spacing:-0.22px">Fault offset: 0x00007ff9786d1000</div>
<div class="t" style="left:2px;top:79.10px;font-size:15px;letter-spacing:-0.22px">Identifiant du processus défaillant : 0x17A4</div>
<div class="t" style="left:2px;top:97.80px;font-size:15px;letter-spacing:-0.22px">Heure de début de l&#x27;application défaillante : 0x1DB464D687D8B2A</div>
<div class="t" style="left:2px;top:116.50px;font-size:15px;letter-spacing:-0.22px">Chemin de l&#x27;application défaillante : C:\WINDOWS\System32\DriverStore\FileRepository\asussci2.inf_amd64_297e45ff3dc1a532\ASUSSystemAnalysis</div>
</div>
<div class="r" style="left:1480px;top:614px;width:22px;height:130px;background:#f0f0f0"></div>
<div class="r" style="left:1480px;top:614px;width:1px;height:130px;background:#e6e6e6"></div>
<div class="r" style="left:1487px;top:635px;width:6px;height:50px;background:#878787"></div>
<div class="t" style="left:401px;top:767.30px;font-size:15px;color:#1c1c1c;font-weight:normal;letter-spacing:-0.15px;">Journal :</div>
<div class="t" style="left:502px;top:768.30px;font-size:15px;color:#1c1c1c;font-weight:normal;letter-spacing:-0.15px;">Application</div>
<div class="t" style="left:401px;top:797.30px;font-size:15px;color:#1c1c1c;font-weight:normal;letter-spacing:-0.15px;">Source :</div>
<div class="t" style="left:502px;top:798.30px;font-size:15px;color:#1c1c1c;font-weight:normal;letter-spacing:-0.15px;">Application Error</div>
<div class="t" style="left:401px;top:827.30px;font-size:15px;color:#1c1c1c;font-weight:normal;letter-spacing:-0.15px;">Événement :</div>
<div class="t" style="left:502px;top:828.30px;font-size:15px;color:#1c1c1c;font-weight:normal;letter-spacing:-0.15px;">1000</div>
<div class="t" style="left:401px;top:857.30px;font-size:15px;color:#1c1c1c;font-weight:normal;letter-spacing:-0.15px;">Niveau :</div>
<div class="t" style="left:502px;top:858.30px;font-size:15px;color:#1c1c1c;font-weight:normal;letter-spacing:-0.15px;">Erreur</div>
<div class="t" style="left:401px;top:887.30px;font-size:15px;color:#1c1c1c;font-weight:normal;letter-spacing:-0.15px;">Utilisateur :</div>
<div class="t" style="left:502px;top:888.30px;font-size:15px;color:#1c1c1c;font-weight:normal;letter-spacing:-0.15px;">Système</div>
<div class="t" style="left:401px;top:917.30px;font-size:15px;color:#1c1c1c;font-weight:normal;letter-spacing:-0.15px;">Opcode :</div>
<div class="t" style="left:502px;top:918.30px;font-size:15px;color:#1c1c1c;font-weight:normal;letter-spacing:-0.15px;">Informations</div>
<div class="t" style="left:700px;top:797.30px;font-size:15px;color:#1c1c1c;font-weight:normal;letter-spacing:-0.15px;">Connecté :</div>
<div class="t" style="left:791px;top:798.30px;font-size:15px;color:#1c1c1c;font-weight:normal;letter-spacing:-0.55px;">12/5/2024 12:00:08 AM</div>
<div class="t" style="left:700px;top:827.30px;font-size:15px;color:#1c1c1c;font-weight:normal;letter-spacing:-0.15px;">Catégorie :</div>
<div class="t" style="left:791px;top:828.30px;font-size:15px;color:#1c1c1c;font-weight:normal;letter-spacing:-0.15px;">Événements d’arrêts inattendus d’applications</div>
<div class="t" style="left:700px;top:857.30px;font-size:15px;color:#1c1c1c;font-weight:normal;letter-spacing:-0.15px;">Mots-clés :</div>
<div class="t" style="left:791px;top:858.30px;font-size:15px;color:#1c1c1c;font-weight:normal;letter-spacing:-0.15px;"></div>
<div class="t" style="left:700px;top:887.30px;font-size:15px;color:#1c1c1c;font-weight:normal;letter-spacing:-0.15px;">Ordinateur :</div>
<div class="t" style="left:791px;top:888.30px;font-size:15px;color:#1c1c1c;font-weight:normal;letter-spacing:-1.35px;">LAPTOP-LF1TQ2A2</div>
<div class="r" style="left:1565px;top:94px;width:355px;height:897px;background:#fff"></div>
<div class="r" style="left:1565px;top:94px;width:353px;height:3px;background:#747474"></div>
<div class="r" style="left:1565px;top:94px;width:353px;height:1px;background:#9a9a9a"></div>
<div class="r" style="left:1564px;top:94px;width:1px;height:896px;background:#a8a8a8"></div>
<div class="r" style="left:1565px;top:94px;width:2px;height:895px;background:#6e6e6e"></div>
<div class="r" style="left:1917px;top:97px;width:1px;height:892px;background:#e3e3e3"></div>
<div class="r" style="left:1567px;top:989px;width:351px;height:1px;background:#e3e3e3"></div>
<div class="r" style="left:1567px;top:99px;width:350px;height:22px;background:#f0f0f0"></div>
<div class="r" style="left:1567px;top:121px;width:350px;height:2px;background:#b3b3b3"></div>
<div class="t" style="left:1573px;top:104.30px;font-size:15px;color:#000;font-weight:bold;letter-spacing:-0.2px;">Actions</div>
<div class="r" style="left:1567px;top:124px;width:350px;height:31px;background:linear-gradient(#c4d9f0,#a2bedd)"></div>
<div class="t" style="left:1576px;top:133.30px;font-size:15px;color:#1c1c1c;font-weight:normal;letter-spacing:-0.3px;">Application</div>
<svg class="r" style="left:1897px;top:137px" width="13" height="7" viewBox="0 0 13 7"><path d="M0 7 L6.5 0 L13 7Z" fill="#000"/></svg>
<svg class="r" style="left:1573px;top:161px" width="20" height="20" viewBox="0 0 20 20"><path d="M1 6 H7 L8 4 H14 V16 H1Z" fill="#e9c96b" stroke="#b8973e" stroke-width="0.8"/><path d="M1 16 L4 9 H19 L15 16Z" fill="#f6dd93" stroke="#b8973e" stroke-width="0.8"/><rect x="12" y="1" width="3" height="1" fill="#4c4"/></svg>
<div class="t" style="left:1606px;top:163.80px;font-size:15px;color:#1c1c1c;font-weight:normal;letter-spacing:-0.3px;">Ouvrir le journal enregistré...</div>
<svg class="r" style="left:1573px;top:191px" width="20" height="20" viewBox="0 0 20 20"><path d="M2 3 H18 L12 10 V18 H9 V10Z" fill="#8f9fb0" stroke="#5b6b7b" stroke-width="0.6"/><circle cx="7" cy="5" r="3.5" fill="#f7a21b"/></svg>
<div class="t" style="left:1606px;top:193.80px;font-size:15px;color:#1c1c1c;font-weight:normal;letter-spacing:-0.3px;">Créer une vue personnalisée...</div>
<div class="t" style="left:1606px;top:223.80px;font-size:15px;color:#1c1c1c;font-weight:normal;letter-spacing:-0.3px;">Importer une vue personnalisée...</div>
<div class="t" style="left:1606px;top:254.80px;font-size:15px;color:#1c1c1c;font-weight:normal;letter-spacing:-0.3px;">Effacer le journal...</div>
<svg class="r" style="left:1573px;top:282px" width="20" height="20" viewBox="0 0 20 20"><path d="M1 3 H19 L12 10 V18 H9 V10Z" fill="#9aabbd" stroke="#5b6b7b" stroke-width="0.6"/></svg>
<div class="t" style="left:1606px;top:284.80px;font-size:15px;color:#1c1c1c;font-weight:normal;letter-spacing:-0.3px;">Filtrer le journal actuel...</div>
<svg class="r" style="left:1573px;top:312px" width="20" height="20" viewBox="0 0 20 20"><rect x="1" y="1.5" width="18" height="19" rx="1.5" fill="#f7f7f7" stroke="#8d9096" stroke-width="1.4"/><rect x="2" y="2.5" width="16" height="2" fill="#e2e4e8"/><rect x="4" y="7" width="12" height="9" fill="#fff" stroke="#a8acb4" stroke-width="0.9"/><rect x="4" y="7" width="12" height="2" fill="#dfe2e8"/><rect x="5.2" y="11" width="1.6" height="1.4" fill="#3aa0e8"/><rect x="5.2" y="13.5" width="1.6" height="1.2" fill="#999"/><rect x="8" y="11" width="7" height="1.2" fill="#8e939a"/><rect x="8" y="13.5" width="7" height="1.2" fill="#8e939a"/><rect x="7.5" y="18.5" width="4" height="2" fill="#2bb0f0"/></svg>
<div class="t" style="left:1606px;top:314.80px;font-size:15px;color:#1c1c1c;font-weight:normal;letter-spacing:-0.3px;">Propriétés</div>
<svg class="r" style="left:1573px;top:342px" width="20" height="20" viewBox="0 0 20 20"><rect x="1" y="3" width="7" height="11" rx="2" fill="#5c6670"/><rect x="12" y="3" width="7" height="11" rx="2" fill="#5c6670"/><rect x="7" y="5" width="6" height="4" fill="#444"/><circle cx="4.5" cy="15" r="3" fill="#3aa0e0" stroke="#333" stroke-width="0.8"/><circle cx="15.5" cy="15" r="3" fill="#3aa0e0" stroke="#333" stroke-width="0.8"/></svg>
<div class="t" style="left:1606px;top:344.80px;font-size:15px;color:#1c1c1c;font-weight:normal;letter-spacing:-0.3px;">Rechercher...</div>
<svg class="r" style="left:1573px;top:372px" width="20" height="20" viewBox="0 0 20 20"><path d="M1.5 2 H17 L18.5 3.5 V18.5 H1.5Z" fill="#2b2b2b"/><rect x="5" y="2" width="9" height="6" fill="#eee"/><rect x="4" y="11" width="12" height="7.5" fill="#555"/><rect x="4" y="11" width="12" height="1.5" fill="#888"/></svg>
<div class="t" style="left:1606px;top:374.80px;font-size:15px;color:#1c1c1c;font-weight:normal;letter-spacing:-0.3px;">Enregistrer tous les événements sous...</div>
<div class="t" style="left:1606px;top:404.80px;font-size:15px;color:#1c1c1c;font-weight:normal;letter-spacing:-0.3px;">Joindre une tâche à ce journal...</div>
<div class="t" style="left:1606px;top:435.80px;font-size:15px;color:#1c1c1c;font-weight:normal;letter-spacing:-0.3px;">Affichage</div>
<svg class="r" style="left:1573px;top:464px" width="20" height="20" viewBox="0 0 20 20"><path d="M3 1.5 H13 L17 5.5 V18.5 H3Z" fill="#fafafa" stroke="#8a8a8a" stroke-width="0.9"/><path d="M14 11 A4.5 4.5 0 1 1 10 6.5" fill="none" stroke="#2fb33f" stroke-width="2.3"/><path d="M9 3.5 L13 6.5 L9 9.5Z" fill="#2fb33f"/></svg>
<div class="t" style="left:1606px;top:466.80px;font-size:15px;color:#1c1c1c;font-weight:normal;letter-spacing:-0.3px;">Actualiser</div>
<svg class="r" style="left:1573px;top:495px" width="20" height="20" viewBox="0 0 20 20"><defs><linearGradient id="hb2" x1="0" y1="0" x2="1" y2="0"><stop offset="0" stop-color="#203c9c"/><stop offset=".25" stop-color="#2f55c8"/><stop offset="1" stop-color="#6f8ff0"/></linearGradient></defs><rect x="2" y="0.5" width="16" height="19.5" fill="url(#hb2)"/><rect x="2" y="0.5" width="3" height="19.5" fill="#24409a"/><text x="11" y="16.5" font-family="Liberation Serif" font-weight="bold" font-size="16" fill="#f4f4ff" text-anchor="middle">?</text></svg>
<div class="t" style="left:1606px;top:497.80px;font-size:15px;color:#1c1c1c;font-weight:normal;letter-spacing:-0.3px;">Aide</div>
<div class="r" style="left:1573px;top:246px;width:338px;height:1px;background:#e6e6e6"></div>
<div class="r" style="left:1573px;top:427px;width:338px;height:1px;background:#e6e6e6"></div>
<div class="r" style="left:1573px;top:458px;width:338px;height:1px;background:#e6e6e6"></div>
<div class="r" style="left:1573px;top:489px;width:338px;height:1px;background:#e6e6e6"></div>
<svg class="r" style="left:1899px;top:436px" width="7" height="13" viewBox="0 0 7 13"><path d="M0 0 L7 6.5 L0 13Z" fill="#000"/></svg>
<div class="r" style="left:1567px;top:526px;width:350px;height:31px;background:linear-gradient(#c4d9f0,#a2bedd)"></div>
<div class="t" style="left:1576px;top:535.30px;font-size:15px;color:#1c1c1c;font-weight:normal;letter-spacing:-0.3px;">Événement 1000, Application Error</div>
<svg class="r" style="left:1897px;top:539px" width="13" height="7" viewBox="0 0 13 7"><path d="M0 7 L6.5 0 L13 7Z" fill="#000"/></svg>
<svg class="r" style="left:1573px;top:563px" width="20" height="20" viewBox="0 0 20 20"><rect x="1" y="1.5" width="18" height="19" rx="1.5" fill="#f7f7f7" stroke="#8d9096" stroke-width="1.4"/><rect x="2" y="2.5" width="16" height="2" fill="#e2e4e8"/><rect x="4" y="7" width="12" height="9" fill="#fff" stroke="#a8acb4" stroke-width="0.9"/><rect x="4" y="7" width="12" height="2" fill="#dfe2e8"/><rect x="5.2" y="11" width="1.6" height="1.4" fill="#3aa0e8"/><rect x="5.2" y="13.5" width="1.6" height="1.2" fill="#999"/><rect x="8" y="11" width="7" height="1.2" fill="#8e939a"/><rect x="8" y="13.5" width="7" height="1.2" fill="#8e939a"/><rect x="7.5" y="18.5" width="4" height="2" fill="#2bb0f0"/></svg>
<div class="t" style="left:1606px;top:565.80px;font-size:15px;color:#1c1c1c;font-weight:normal;letter-spacing:-0.3px;">Propriétés de l’événement</div>
<svg class="r" style="left:1573px;top:593px" width="20" height="20" viewBox="0 0 20 20"><rect x="3.5" y="3" width="16" height="17" rx="1" fill="#ecebe8" stroke="#8a8a8a" stroke-width="1"/><rect x="3.5" y="2.5" width="16" height="1.6" fill="#9a5a40"/><circle cx="11.5" cy="11.5" r="5.3" fill="#dfeaee" stroke="#8d9aa0" stroke-width="1.4"/><path d="M11.5 8 V11.5 H9" stroke="#6a7a88" stroke-width="1" fill="none"/><path d="M11.5 6.2 A5.3 5.3 0 0 1 16.8 11.5 L11.5 11.5Z" fill="#e8c25a" opacity=".8"/><path d="M4.5 0.5 L5.5 3 L8 2.5 L6.5 4.5 L8.5 6 L6 6.2 L5.5 8.5 L4.3 6.5 L2 7.5 L3 5 L0.5 4 L3.2 3.2Z" fill="#f5a623"/></svg>
<div class="t" style="left:1606px;top:595.80px;font-size:15px;color:#1c1c1c;font-weight:normal;letter-spacing:-0.3px;">Joindre une tâche à cet événement...</div>
<svg class="r" style="left:1573px;top:623px" width="20" height="20" viewBox="0 0 20 20"><path d="M0.5 0.5 H8 L9.5 2 V15.5 H0.5Z" fill="#fafafa" stroke="#9a9a9a" stroke-width="0.9"/><path d="M8 6.5 H15 L19 10.5 V20 H8Z" fill="#fafafa" stroke="#9a9a9a" stroke-width="0.9"/><g fill="#5b8fd8"><rect x="2.5" y="5" width="3" height="1"/><rect x="2.5" y="8" width="6" height="1.3"/><rect x="2.5" y="10.5" width="6" height="1.3"/><rect x="10" y="13" width="2.5" height="1"/><rect x="10" y="15.5" width="7.5" height="1.3"/><rect x="10" y="17.5" width="7.5" height="1.3"/></g></svg>
<div class="t" style="left:1606px;top:625.80px;font-size:15px;color:#1c1c1c;font-weight:normal;letter-spacing:-0.3px;">Copier</div>
<svg class="r" style="left:1573px;top:653px" width="20" height="20" viewBox="0 0 20 20"><path d="M1.5 2 H17 L18.5 3.5 V18.5 H1.5Z" fill="#2b2b2b"/><rect x="5" y="2" width="9" height="6" fill="#eee"/><rect x="4" y="11" width="12" height="7.5" fill="#555"/><rect x="4" y="11" width="12" height="1.5" fill="#888"/></svg>
<div class="t" style="left:1606px;top:655.80px;font-size:15px;color:#1c1c1c;font-weight:normal;letter-spacing:-0.3px;">Enregistrer les événements sélectionnés...</div>
<svg class="r" style="left:1573px;top:684px" width="20" height="20" viewBox="0 0 20 20"><path d="M3 1.5 H13 L17 5.5 V18.5 H3Z" fill="#fafafa" stroke="#8a8a8a" stroke-width="0.9"/><path d="M14 11 A4.5 4.5 0 1 1 10 6.5" fill="none" stroke="#2fb33f" stroke-width="2.3"/><path d="M9 3.5 L13 6.5 L9 9.5Z" fill="#2fb33f"/></svg>
<div class="t" style="left:1606px;top:686.80px;font-size:15px;color:#1c1c1c;font-weight:normal;letter-spacing:-0.3px;">Actualiser</div>
<svg class="r" style="left:1573px;top:715px" width="20" height="20" viewBox="0 0 20 20"><defs><linearGradient id="hb2" x1="0" y1="0" x2="1" y2="0"><stop offset="0" stop-color="#203c9c"/><stop offset=".25" stop-color="#2f55c8"/><stop offset="1" stop-color="#6f8ff0"/></linearGradient></defs><rect x="2" y="0.5" width="16" height="19.5" fill="url(#hb2)"/><rect x="2" y="0.5" width="3" height="19.5" fill="#24409a"/><text x="11" y="16.5" font-family="Liberation Serif" font-weight="bold" font-size="16" fill="#f4f4ff" text-anchor="middle">?</text></svg>
<div class="t" style="left:1606px;top:717.80px;font-size:15px;color:#1c1c1c;font-weight:normal;letter-spacing:-0.3px;">Aide</div>
<div class="r" style="left:1573px;top:678px;width:338px;height:1px;background:#e6e6e6"></div>
<div class="r" style="left:1573px;top:709px;width:338px;height:1px;background:#e6e6e6"></div>
<svg class="r" style="left:1899px;top:627px" width="7" height="13" viewBox="0 0 7 13"><path d="M0 0 L7 6.5 L0 13Z" fill="#000"/></svg>
<div class="r" style="left:0px;top:991px;width:1920px;height:29px;background:#f0f0f0"></div>
<div class="r" style="left:1644px;top:994px;width:1px;height:25px;background:#d8d8d8"></div>
<div class="r" style="left:1810px;top:994px;width:1px;height:25px;background:#d8d8d8"></div>
<div class="r" style="left:1916px;top:994px;width:1px;height:25px;background:#d8d8d8"></div>
<div class="r" style="left:0px;top:991px;width:1920px;height:1px;background:#e6e6e6"></div>
<div class="r" style="left:0px;top:1019px;width:1920px;height:1px;background:#fafafa"></div>
<div class="r" style="left:0px;top:1020px;width:1920px;height:60px;background:linear-gradient(90deg,#1e212c 0%,#1e212c 4%,#182342 18%,#12215a 32%,#14205a 44%,#1b1f45 55%,#172246 69%,#1d212d 82%,#1d1f2b 100%)"></div>
<svg class="r" style="left:125px;top:1035px" width="30" height="30" viewBox="0 0 30 30"><defs><linearGradient id="ws" x1="0" y1="0" x2="1" y2="1"><stop offset="0" stop-color="#7ee0ff"/><stop offset="1" stop-color="#0a8fe8"/></linearGradient></defs><g fill="url(#ws)"><rect x="0" y="0" width="14" height="14" rx="1.2"/><rect x="16" y="0" width="14" height="14" rx="1.2"/><rect x="0" y="16" width="14" height="14" rx="1.2"/><rect x="16" y="16" width="14" height="14" rx="1.2"/></g></svg>
<div class="r" style="left:172px;top:1030px;width:275px;height:40px;border-radius:20px;background:linear-gradient(90deg,#3a3e49 0%,#3a404f 45%,#3b4a70 100%);border:1px solid #4a5060"></div>
<svg class="r" style="left:186px;top:1042px" width="20" height="20" viewBox="0 0 20 20"><circle cx="8" cy="8" r="6.3" fill="none" stroke="#e8e8e8" stroke-width="2"/><path d="M12.5 12.5 L18 18" stroke="#e8e8e8" stroke-width="2.2" stroke-linecap="round"/></svg>
<div class="t" style="left:218.5px;top:1043.96px;font-size:16px;color:#e6e6e6;font-weight:normal;letter-spacing:0.2px;">Rechercher</div>
<svg class="r" style="left:461px;top:1036px" width="30" height="28" viewBox="0 0 30 28"><rect x="0" y="8" width="22" height="20" rx="2" fill="#5a5a5a"/><rect x="7" y="0" width="23" height="21" rx="2" fill="#f2f2f2"/><rect x="7" y="8" width="15" height="13" fill="#bdbdbd"/></svg>
<svg class="r" style="left:516px;top:1039px" width="30" height="22" viewBox="0 0 30 22"><defs><linearGradient id="mon" x1="0" y1="0" x2="0" y2="1"><stop offset="0" stop-color="#3aa6ec"/><stop offset="1" stop-color="#c6ecff"/></linearGradient></defs><rect x="0" y="0" width="30" height="22" rx="1.5" fill="#0b66bd"/><path d="M0 11 L4 6 Q7 2 10 8 L13 13 Q15 16 17 10 L20 5 Q22 2 24 7 L27 12 L30 10 V22 H0Z" fill="#1f8fe0"/><path d="M0 14 L3 11 Q6 7 9 13 L12 18 L15 14 Q17 10 19 12 L21 9 Q23 6 25 11 L30 15 V22 H0Z" fill="url(#mon)"/></svg>
<svg class="r" style="left:571px;top:1037px" width="30" height="27" viewBox="0 0 30 27"><defs><linearGradient id="fd" x1="0" y1="0" x2="1" y2="1"><stop offset="0" stop-color="#ffe07a"/><stop offset="1" stop-color="#f6b61e"/></linearGradient></defs><path d="M0 2 A2 2 0 0 1 2 0 H9 L12 3 H28 A2 2 0 0 1 30 5 V26 H0Z" fill="#e3a008"/><rect x="0" y="3.5" width="30" height="22.5" rx="1.5" fill="url(#fd)"/><path d="M5 20 A2 2 0 0 1 7 18 H23 A2 2 0 0 1 25 20 V26.5 H5Z" fill="#1a74d2"/><rect x="9" y="21" width="12" height="1" fill="#0d3f80"/></svg>
<svg class="r" style="left:629px;top:1035px" width="24" height="30" viewBox="0 0 24 30"><defs><linearGradient id="np" x1="0" y1="0" x2="0" y2="1"><stop offset="0" stop-color="#8edcf0"/><stop offset="1" stop-color="#3aa9cf"/></linearGradient></defs><rect x="0.5" y="2.5" width="22" height="25" rx="1.5" fill="url(#np)"/><rect x="0.5" y="25.5" width="22" height="1.5" fill="#f2f2f2"/><rect x="0.5" y="27" width="22" height="2.5" rx="1" fill="#b35a1a"/><g fill="#0f6c8c"><rect x="4" y="9" width="15" height="2"/><rect x="4" y="14" width="15" height="2"/><rect x="4" y="19" width="15" height="2"/></g><g fill="#136c8a"><path d="M3.5 0 L5 1.8 L3.5 3.6 L2 1.8Z"/><path d="M8.5 0 L10 1.8 L8.5 3.6 L7 1.8Z"/><path d="M13.5 0 L15 1.8 L13.5 3.6 L12 1.8Z"/><path d="M18.5 0 L20 1.8 L18.5 3.6 L17 1.8Z"/></g></svg>
<svg class="r" style="left:681px;top:1039px" width="30" height="23" viewBox="0 0 30 23"><rect x="0" y="0" width="30" height="23" rx="1" fill="#5fc0ee"/><rect x="2" y="2" width="26" height="17" fill="#e6f6ff"/><circle cx="10" cy="10" r="6" fill="#2f8de0"/><path d="M10 10 V4 A6 6 0 0 1 16 10Z" fill="#f39a1e"/><g fill="#2f8de0"><rect x="19" y="5" width="6" height="3"/><rect x="19" y="10" width="6" height="3"/><rect x="19" y="15" width="4" height="2"/></g><rect x="3" y="20" width="10" height="1.5" fill="#f39a1e"/></svg>
<svg class="r" style="left:736px;top:1035px" width="30" height="30" viewBox="0 0 30 30"><circle cx="15" cy="15" r="15" fill="#db4437"/><path d="M15 15 L2 7.5 A15 15 0 0 0 15 30Z" fill="#0f9d58"/><path d="M15 15 L15 30 A15 15 0 0 0 28 7.5Z" fill="#f4b400"/><path d="M15 15 L28 7.5 H15" fill="#db4437"/><circle cx="15" cy="15" r="7" fill="#fff"/><circle cx="15" cy="15" r="5.6" fill="#1a73e8"/></svg>
<svg class="r" style="left:791px;top:1038px" width="28" height="23" viewBox="0 0 28 23"><rect x="0" y="0" width="28" height="23" fill="#8a8a8a"/><rect x="1" y="3" width="26" height="19" fill="#000"/><rect x="1" y="1" width="26" height="2" fill="#cfcfcf"/><path d="M3 6 H6 M3 8 H13" stroke="#ccc" stroke-width="0.8"/></svg>
<svg class="r" style="left:847px;top:1036px" width="28" height="27" viewBox="0 0 28 27"><rect x="1" y="1" width="26" height="25" rx="3" fill="#001e36" stroke="#31c5f0" stroke-width="2"/><text x="14" y="19.5" font-family="Liberation Sans" font-weight="bold" font-size="14" fill="#31c5f0" text-anchor="middle">Ps</text></svg>
<svg class="r" style="left:904px;top:1035px" width="24" height="30" viewBox="0 0 24 30"><rect x="0" y="0" width="24" height="30" rx="2" fill="#6b7480"/><rect x="2" y="2" width="20" height="6" fill="#5fd0f5"/><g fill="#e9eef2"><rect x="2.5" y="10" width="5" height="5"/><rect x="9.5" y="10" width="5" height="5"/><rect x="16.5" y="10" width="5" height="5"/><rect x="2.5" y="17" width="5" height="5"/><rect x="9.5" y="17" width="5" height="5"/><rect x="2.5" y="24" width="5" height="4.5"/><rect x="9.5" y="24" width="5" height="4.5"/></g><rect x="16.5" y="17" width="5" height="11.5" fill="#1d4e8f"/></svg>
<svg class="r" style="left:956px;top:1036px" width="30" height="28" viewBox="0 0 30 28"><rect x="7" y="1" width="22" height="26" rx="2" fill="#2b7cd3"/><rect x="7" y="10" width="22" height="9" fill="#185abd"/><rect x="7" y="19" width="22" height="8" fill="#103f91"/><rect x="0" y="6" width="16" height="16" rx="2" fill="#185abd"/><text x="8" y="18.5" font-family="Liberation Sans" font-weight="bold" font-size="12" fill="#fff" text-anchor="middle">W</text></svg>
<svg class="r" style="left:1011px;top:1036px" width="30" height="28" viewBox="0 0 30 28"><rect x="7" y="1" width="22" height="26" rx="2" fill="#21a366"/><rect x="18" y="1" width="11" height="9" fill="#33c481"/><rect x="7" y="10" width="22" height="9" fill="#107c41"/><rect x="7" y="19" width="22" height="8" fill="#185c37"/><rect x="0" y="6" width="16" height="16" rx="2" fill="#107c41"/><text x="8" y="18.5" font-family="Liberation Sans" font-weight="bold" font-size="12" fill="#fff" text-anchor="middle">X</text></svg>
<svg class="r" style="left:1066px;top:1035px" width="30" height="30" viewBox="0 0 30 30"><defs><radialGradient id="ff" cx="60%" cy="20%" r="90%"><stop offset="0" stop-color="#ffe226"/><stop offset=".45" stop-color="#ff7139"/><stop offset="1" stop-color="#e31587"/></radialGradient></defs><circle cx="15" cy="16.5" r="13.5" fill="url(#ff)"/><path d="M19 0 C26 6 27 12 24 16 C24 10 20 7 19 0Z" fill="#ffbd4f"/><circle cx="14" cy="16" r="7" fill="#7542e5"/><path d="M7 15 C8 10 13 8 17 10 C13 11 11 13 11 16Z" fill="#ff9640"/></svg>
<svg class="r" style="left:1121px;top:1035px" width="30" height="30" viewBox="0 0 30 30"><circle cx="15" cy="15" r="15" fill="#5865f2"/><path d="M8 10 C10 8.5 12 8 13 8 L13.5 9 C14.5 8.8 15.5 8.8 16.5 9 L17 8 C18 8 20 8.5 22 10 C23.5 13 24 16 23.5 19.5 C22 20.7 20.5 21.3 19 21.7 L18 20 C19 19.7 19.6 19.3 20 19 C17 20.5 13 20.5 10 19 C10.4 19.3 11 19.7 12 20 L11 21.7 C9.5 21.3 8 20.7 6.5 19.5 C6 16 6.5 13 8 10Z" fill="#fff"/><ellipse cx="12" cy="15.5" rx="1.6" ry="1.8" fill="#5865f2"/><ellipse cx="18" cy="15.5" rx="1.6" ry="1.8" fill="#5865f2"/></svg>
<svg class="r" style="left:1176px;top:1035px" width="28" height="30" viewBox="0 0 28 30"><defs><linearGradient id="rb" x1="0" y1="0" x2="1" y2="1"><stop offset="0" stop-color="#ff2a00"/><stop offset=".3" stop-color="#ffd400"/><stop offset=".55" stop-color="#22c322"/><stop offset=".8" stop-color="#1a8fe0"/><stop offset="1" stop-color="#2b3bd0"/></linearGradient></defs><rect x="0" y="0" width="28" height="30" fill="#111"/><rect x="1" y="4" width="26" height="22" fill="url(#rb)"/><g fill="#555"><rect x="2" y="1" width="2" height="2"/><rect x="7" y="1" width="2" height="2"/><rect x="12" y="1" width="2" height="2"/><rect x="17" y="1" width="2" height="2"/><rect x="22" y="1" width="2" height="2"/><rect x="2" y="27" width="2" height="2"/><rect x="7" y="27" width="2" height="2"/><rect x="12" y="27" width="2" height="2"/><rect x="17" y="27" width="2" height="2"/><rect x="22" y="27" width="2" height="2"/></g></svg>
<svg class="r" style="left:1232px;top:1035px" width="28" height="30" viewBox="0 0 28 30"><defs><linearGradient id="rv1" x1="0" y1="0" x2="1" y2="0"><stop offset="0" stop-color="#777"/><stop offset=".4" stop-color="#e6e6e6"/><stop offset="1" stop-color="#8a8a8a"/></linearGradient><linearGradient id="rv2" x1="0" y1="0" x2="1" y2="0"><stop offset="0" stop-color="#1b4fa8"/><stop offset=".5" stop-color="#3f86e8"/><stop offset="1" stop-color="#1b4fa8"/></linearGradient></defs><path d="M1 4 H14 V26 H2Z" fill="url(#rv1)"/><rect x="1" y="3" width="13" height="3" fill="#ccc"/><path d="M12 16 H27 L26 29 H13Z" fill="url(#rv2)"/><ellipse cx="19.5" cy="16" rx="7.5" ry="2.2" fill="#e6eef8"/><ellipse cx="19.5" cy="28.5" rx="6.5" ry="1.5" fill="#b9c8dc"/><text x="19.5" y="26.5" font-family="Liberation Serif" font-style="italic" font-weight="bold" font-size="11" fill="#fff" text-anchor="middle">R</text><path d="M13 5 C15 1 20 0 22 4.5 L24.5 3.5 L22.5 10 L17 6.5 L19.5 5.8 C18 3.5 15.5 3.5 14 6Z" fill="#e8201c"/></svg>
<svg class="r" style="left:1286px;top:1037px" width="30" height="26" viewBox="0 0 30 26"><defs><linearGradient id="cpa" x1="0" y1="0" x2="0" y2="1"><stop offset="0" stop-color="#22b0ff"/><stop offset=".3" stop-color="#1596e0"/><stop offset=".6" stop-color="#5dbb5a"/><stop offset="1" stop-color="#f2c814"/></linearGradient><linearGradient id="cpb" x1="0" y1="0" x2="0" y2="1"><stop offset="0" stop-color="#b45ee8"/><stop offset=".55" stop-color="#f2588c"/><stop offset="1" stop-color="#ffa35a"/></linearGradient></defs><path d="M14 1.5 H19.5 Q21 1.5 21.8 4 L22.5 7.5 H16Z" fill="#1a4fd8"/><path d="M7 18 H12 L13.5 24.5 H10 Q8.5 24.5 8 22.5Z" fill="#f0502a"/><path d="M8.5 1 H15 Q17 1 16.5 3.2 L12.5 17.5 Q12 19.5 9.5 19.5 H3 Q0.5 19.5 1 17 L5 3 Q5.7 1 8.5 1Z" fill="url(#cpa)"/><path d="M20 7 H27 Q29.5 7 29 9.5 L25 23.5 Q24.3 25.5 22 25.5 H15 Q13 25.5 13.5 23.3 L17.5 9 Q18.2 7 20 7Z" fill="url(#cpb)"/></svg>
<svg class="r" style="left:1342px;top:1035px" width="30" height="30" viewBox="0 0 30 30"><path d="M9 7 V3 A2 2 0 0 1 11 1 H19 A2 2 0 0 1 21 3 V7" fill="none" stroke="#3fb5f5" stroke-width="2.4"/><rect x="0" y="6" width="30" height="24" rx="4" fill="#f4f4f4"/><rect x="9" y="11" width="5.5" height="5.5" fill="#f25022"/><rect x="15.5" y="11" width="5.5" height="5.5" fill="#7fba00"/><rect x="9" y="17.5" width="5.5" height="5.5" fill="#00a4ef"/><rect x="15.5" y="17.5" width="5.5" height="5.5" fill="#ffb900"/></svg>
<div class="r" style="left:1387px;top:1025px;width:50px;height:49px;background:rgba(255,255,255,0.08);border-radius:5px;border:1px solid rgba(255,255,255,0.06)"></div>
<svg class="r" style="left:1400px;top:1035px" width="22" height="30" viewBox="0 0 22 30"><rect x="3" y="1" width="18" height="28" rx="1" fill="#8a9bb5"/><rect x="4.5" y="2.5" width="15" height="25" fill="#b9c6da"/><g stroke="#777"><line x1="0.5" y1="5" x2="4" y2="5"/><line x1="0.5" y1="9" x2="4" y2="9"/><line x1="0.5" y1="13" x2="4" y2="13"/><line x1="0.5" y1="17" x2="4" y2="17"/><line x1="0.5" y1="21" x2="4" y2="21"/><line x1="0.5" y1="25" x2="4" y2="25"/></g><path d="M14 6 L19 14 H9Z" fill="#f7d11c"/><circle cx="10" cy="20" r="4.5" fill="#e2262f"/><path d="M8 18 L12 22 M12 18 L8 22" stroke="#fff" stroke-width="1.2"/></svg>
<div class="r" style="left:1402px;top:1070px;width:20px;height:4px;background:#4cc2ff;border-radius:2px"></div>
<svg class="r" style="left:1451px;top:1035px" width="32" height="30" viewBox="0 0 32 30"><circle cx="13" cy="8" r="7.5" fill="#36b8f5"/><path d="M8 14 H26 A5 5 0 0 1 31 19 V28 H8Z" fill="#1a7fd8"/><circle cx="8" cy="21" r="6" fill="#bfe8ff" stroke="#2a9de8" stroke-width="2.2"/><path d="M12 25 L16 29" stroke="#2a9de8" stroke-width="2.5" stroke-linecap="round"/></svg>
<div class="r" style="left:1462px;top:1071px;width:10px;height:3px;background:#9a9a9a;border-radius:2px"></div>
<svg class="r" style="left:1507px;top:1035px" width="30" height="30" viewBox="0 0 30 30"><path d="M10 0 H22 L30 8 V28 H10Z" fill="#ffb31a"/><path d="M6 3 H19 L26 10 V27 H6Z" fill="#ffd34e"/><g fill="#d38a12"><rect x="9" y="9" width="10" height="2"/><rect x="9" y="13" width="13" height="2"/><rect x="9" y="17" width="13" height="2"/></g><circle cx="7" cy="21" r="5.5" fill="#ffe9b0" stroke="#f08b1a" stroke-width="2.2"/><path d="M10.5 25 L14 29" stroke="#f08b1a" stroke-width="2.4" stroke-linecap="round"/></svg>
<div class="r" style="left:1518px;top:1071px;width:10px;height:3px;background:#9a9a9a;border-radius:2px"></div>
<svg class="r" style="left:1634px;top:1045px" width="15" height="9" viewBox="0 0 15 9"><path d="M1 8 L7.5 1.5 L14 8" fill="none" stroke="#fff" stroke-width="1.6"/></svg>
<div class="t" style="left:1675px;top:1044.17px;font-size:13.5px;color:#fff;font-weight:normal;letter-spacing:0px;">FRA</div>
<svg class="r" style="left:1726px;top:1042px" width="20" height="15" viewBox="0 0 20 15"><path d="M1 5 A13 13 0 0 1 19 5" fill="none" stroke="#fff" stroke-width="1.4" opacity=".55"/><path d="M4 8 A9 9 0 0 1 16 8" fill="none" stroke="#fff" stroke-width="1.5"/><path d="M7 11 A4.5 4.5 0 0 1 13 11" fill="none" stroke="#fff" stroke-width="1.5"/><circle cx="10" cy="13.3" r="1.5" fill="#fff"/></svg>
<svg class="r" style="left:1755px;top:1042px" width="21" height="15" viewBox="0 0 21 15"><path d="M1 5 H4 L9 1 V14 L4 10 H1Z" fill="none" stroke="#fff" stroke-width="1.3"/><path d="M13 4.5 L19 10.5 M19 4.5 L13 10.5" stroke="#fff" stroke-width="1.4"/></svg>
<svg class="r" style="left:1785px;top:1039px" width="22" height="18" viewBox="0 0 22 18"><rect x="1" y="5" width="17" height="11" rx="2" fill="none" stroke="#fff" stroke-width="1.4"/><rect x="18" y="8" width="2.5" height="5" rx="1" fill="#fff"/><path d="M6 1 L4 6 H8 L6 11" stroke="#fff" stroke-width="1.3" fill="none"/></svg>
<div class="t" style="right:25px;top:1030px;font-size:14.5px;color:#fff;text-align:right;line-height:20px">2:55 PM<br>1/21/2025</div>
</body></html>
